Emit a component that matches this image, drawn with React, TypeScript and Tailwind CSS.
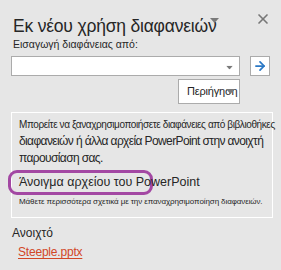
import { ArrowRight, X } from "lucide-react";

const Caret = ({ className }: { className?: string }) => (
  <svg width="9" height="5" viewBox="0 0 9 5" className={className}>
    <path d="M0 0h9L4.5 5z" fill="#7a7a7a" />
  </svg>
);

const App = () => {
  return (
    <div
      className="relative w-[281px] h-[270px] overflow-hidden bg-[#e6e6e6] text-[#262626]"
      style={{ fontFamily: '"Liberation Sans", Arial, sans-serif' }}
    >
      <button className="absolute left-[255px] top-[11px] text-[#777]">
        <X size={16} strokeWidth={2.5} />
      </button>

      <div className="flex flex-col px-[11px] pt-[14px]">
        <div className="relative w-fit pl-[2px] text-[17.5px] leading-[24px] tracking-[-0.2px] whitespace-nowrap">
          Εκ νέου χρήση διαφανειών
          <Caret className="absolute right-[-2px] top-[4px]" />
        </div>

        <div className="pl-[2px] text-[10.5px] leading-[13px] whitespace-nowrap">
          Εισαγωγή διαφάνειας από:
        </div>

        <div className="mt-[5px] flex items-center gap-[10px]">
          <div className="flex h-[20px] w-[232px] items-center justify-end border border-[#ababab] bg-white pr-[5px]">
            <Caret className="mt-[2px] scale-75" />
          </div>
          <button className="flex h-[20px] w-[20px] items-center justify-center border border-[#ababab] bg-white text-[#2b78c5]">
            <ArrowRight size={14} strokeWidth={3} />
          </button>
        </div>

        <div className="mt-[3px] flex justify-end pr-[30px]">
          <button className="relative flex h-[25px] w-[62px] items-center overflow-hidden border border-[#ababab] bg-white pl-[8px] text-[11px] tracking-[-0.2px] whitespace-nowrap">
            Περιήγηση
            <Caret className="absolute right-[4px] top-[9px]" />
          </button>
        </div>

        <div className="mt-[8px] flex h-[106px] w-[262px] flex-col border border-white px-[7px] pt-[3px]">
          <div className="text-[10px] leading-[17px] tracking-[-0.4px] whitespace-nowrap">
            Μπορείτε να ξαναχρησιμοποιήσετε διαφάνειες από βιβλιοθήκες
          </div>
          <div className="text-[12px] leading-[17px] tracking-[-0.62px] whitespace-nowrap">
            διαφανειών ή άλλα αρχεία PowerPoint στην ανοιχτή
          </div>
          <div className="text-[12px] leading-[17px] tracking-[-0.62px] whitespace-nowrap">παρουσίαση σας.</div>
          <div className="relative mt-[7px] text-[12.5px] leading-[17px] whitespace-nowrap">
            <span className="absolute left-[-11px] top-[-4px] h-[25px] w-[145px] rounded-[9px] border-[3px] border-[#a348a3]" />
            <span className="relative">Άνοιγμα αρχείου του PowerPoint</span>
          </div>
          <div className="mt-[5px] text-[8px] leading-[12px] tracking-[-0.1px] whitespace-nowrap">
            Μάθετε περισσότερα σχετικά με την επαναχρησιμοποίηση διαφανειών.
          </div>
        </div>

        <div className="mt-[6px] pl-[1px] text-[12px] leading-[18px]">Ανοιχτό</div>
        <a className="mt-[1px] w-fit pl-[7px] text-[12px] leading-[18px] tracking-[-0.2px] text-[#d24726] underline underline-offset-2">
          Steeple.pptx
        </a>
      </div>
    </div>
  );
};

export default App;
